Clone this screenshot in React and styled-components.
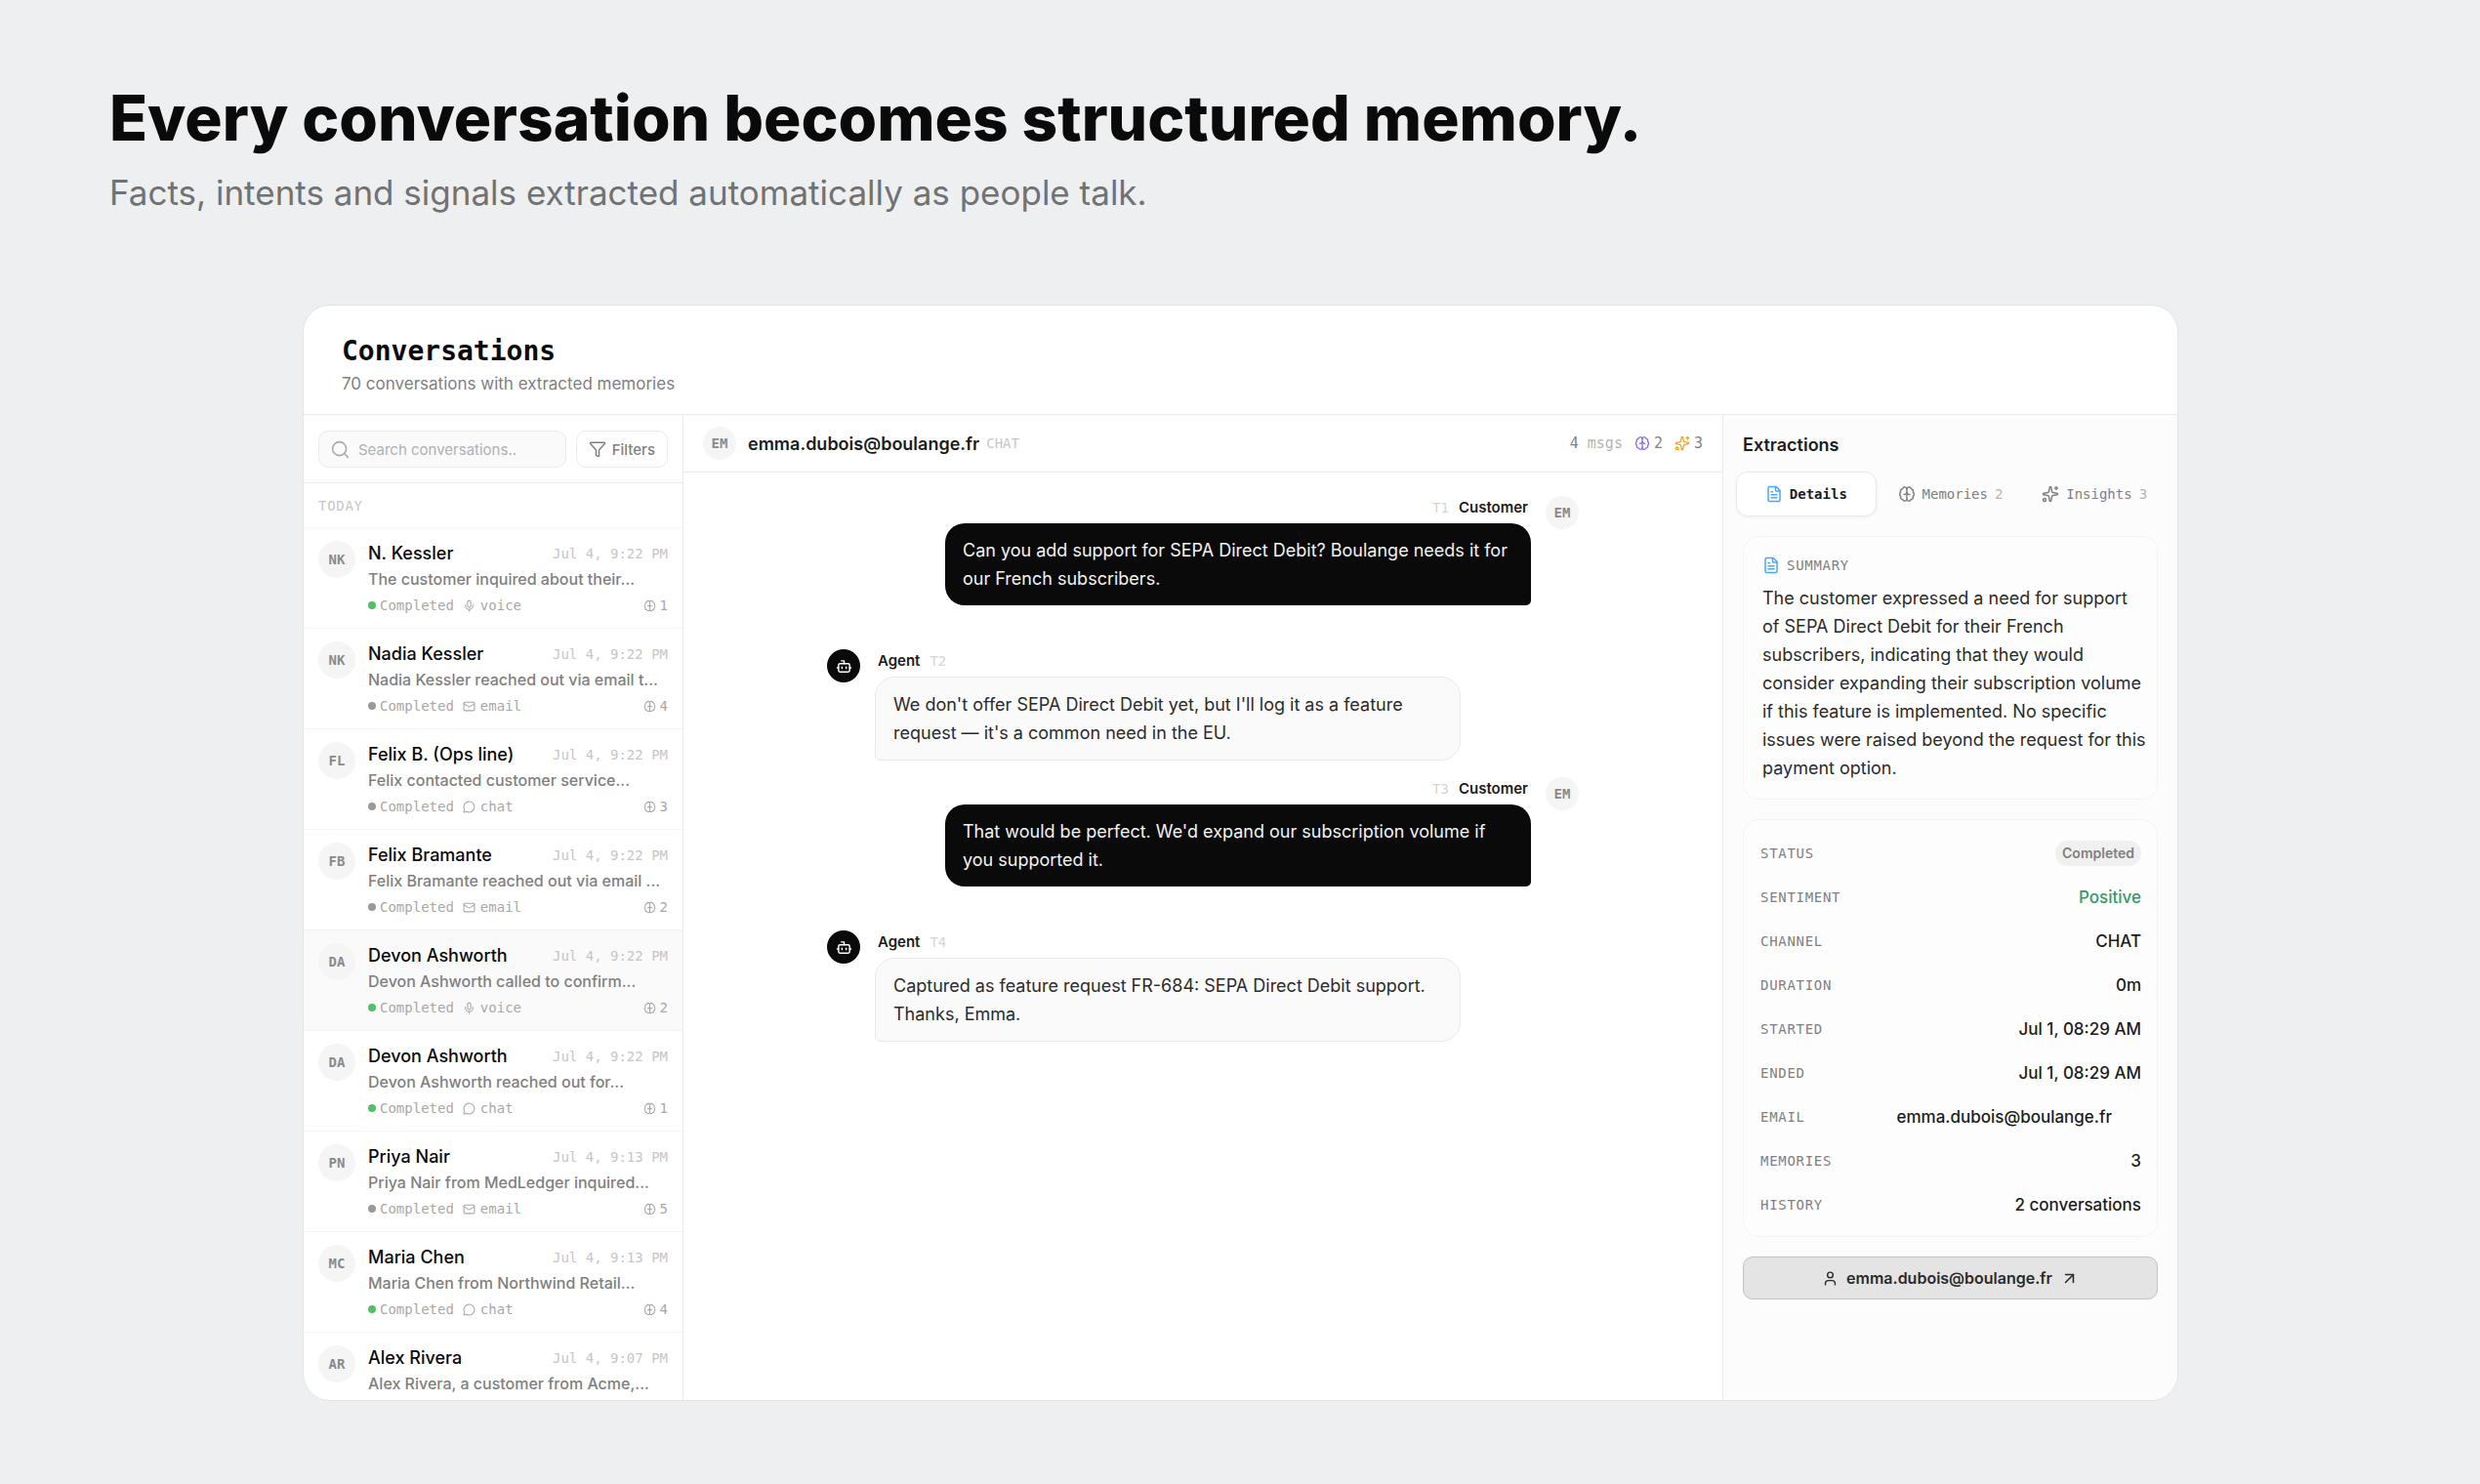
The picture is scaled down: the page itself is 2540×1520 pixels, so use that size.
import styled, { createGlobalStyle, css } from "styled-components";
import {
  ArrowUpRight,
  Bot,
  FileText,
  Funnel,
  Mail,
  MessageCircle,
  Mic,
  Search,
  Sparkles,
  User,
} from "lucide-react";

const conversations = [
  { initials: "NK", name: "N. Kessler", time: "Jul 4, 9:22 PM", text: "The customer inquired about their...", live: true, channel: "voice", count: 1 },
  { initials: "NK", name: "Nadia Kessler", time: "Jul 4, 9:22 PM", text: "Nadia Kessler reached out via email t...", channel: "email", count: 4 },
  { initials: "FL", name: "Felix B. (Ops line)", time: "Jul 4, 9:22 PM", text: "Felix contacted customer service...", channel: "chat", count: 3 },
  { initials: "FB", name: "Felix Bramante", time: "Jul 4, 9:22 PM", text: "Felix Bramante reached out via email ...", channel: "email", count: 2 },
  { initials: "DA", name: "Devon Ashworth", time: "Jul 4, 9:22 PM", text: "Devon Ashworth called to confirm...", live: true, channel: "voice", count: 2, active: true },
  { initials: "DA", name: "Devon Ashworth", time: "Jul 4, 9:22 PM", text: "Devon Ashworth reached out for...", live: true, channel: "chat", count: 1 },
  { initials: "PN", name: "Priya Nair", time: "Jul 4, 9:13 PM", text: "Priya Nair from MedLedger inquired...", channel: "email", count: 5 },
  { initials: "MC", name: "Maria Chen", time: "Jul 4, 9:13 PM", text: "Maria Chen from Northwind Retail...", live: true, channel: "chat", count: 4 },
  { initials: "AR", name: "Alex Rivera", time: "Jul 4, 9:07 PM", text: "Alex Rivera, a customer from Acme,..." },
];

const messages = [
  { turn: "T1", from: "Customer", text: "Can you add support for SEPA Direct Debit? Boulange needs it for our French subscribers." },
  { turn: "T2", from: "Agent", text: "We don't offer SEPA Direct Debit yet, but I'll log it as a feature request — it's a common need in the EU." },
  { turn: "T3", from: "Customer", text: "That would be perfect. We'd expand our subscription volume if you supported it." },
  { turn: "T4", from: "Agent", text: "Captured as feature request FR-684: SEPA Direct Debit support. Thanks, Emma." },
];

const facts = [
  { label: "Status", value: "Completed", kind: "pill" },
  { label: "Sentiment", value: "Positive", kind: "positive" },
  { label: "Channel", value: "CHAT" },
  { label: "Duration", value: "0m" },
  { label: "Started", value: "Jul 1, 08:29 AM" },
  { label: "Ended", value: "Jul 1, 08:29 AM" },
  { label: "Email", value: "emma.dubois@boulange.fr", kind: "copyable" },
  { label: "Memories", value: "3" },
  { label: "History", value: "2 conversations" },
];

const channelIcons = { voice: Mic, email: Mail, chat: MessageCircle };

function BrainIcon({ size = 18, color = "currentColor" }) {
  return (
    <svg width={size} height={size} viewBox="0 0 24 24" fill="none" stroke={color} strokeWidth="2" strokeLinecap="round" strokeLinejoin="round" aria-hidden="true">
      <path d="M12 5v15" />
      <path d="M12 5C11.500 2 7.500 1.500 6.300 4.600C3.800 5.200 2.900 7.500 3.500 9.500C1.800 11 1.800 13.800 3.500 15.200C3 17.500 4.300 19.400 6.500 19.600C7.800 22.300 11.500 22 12 19.500" />
      <path d="M12 5C12.500 2 16.500 1.500 17.700 4.600C20.200 5.200 21.100 7.500 20.500 9.500C22.200 11 22.200 13.800 20.500 15.200C21 17.500 19.700 19.400 17.500 19.600C16.200 22.300 12.500 22 12 19.500" />
      <path d="M8 12.500c2.200 0 4-1 4-3 0 2 1.800 3 4 3" />
    </svg>
  );
}

function ConversationRow({ item }) {
  const ChannelIcon = channelIcons[item.channel];
  return (
    <Row $active={item.active}>
      <Avatar $size={38}>{item.initials}</Avatar>
      <RowBody>
        <RowTop>
          <RowName>{item.name}</RowName>
          <RowTime>{item.time}</RowTime>
        </RowTop>
        <RowText>{item.text}</RowText>
        {ChannelIcon && (
          <RowMeta>
            <Dot $live={item.live} />
            Completed
            <MetaIcon>
              <ChannelIcon size={13} />
            </MetaIcon>
            {item.channel}
            <MetaCount>
              <BrainIcon size={13} />
              {item.count}
            </MetaCount>
          </RowMeta>
        )}
      </RowBody>
    </Row>
  );
}

function ChatMessage({ message }) {
  const isAgent = message.from === "Agent";
  return (
    <Message $agent={isAgent}>
      {isAgent ? (
        <BotAvatar>
          <Bot size={17} />
        </BotAvatar>
      ) : (
        <Avatar $size={34}>EM</Avatar>
      )}
      <MessageBody $agent={isAgent}>
        <MessageLabel $agent={isAgent}>
          <strong>{message.from}</strong>
          <Turn>{message.turn}</Turn>
        </MessageLabel>
        <Bubble $agent={isAgent}>{message.text}</Bubble>
      </MessageBody>
    </Message>
  );
}

export default function App() {
  return (
    <>
      <GlobalStyle />
      <Page>
        <Hero>
          <Headline>Every conversation becomes structured memory.</Headline>
          <Tagline>Facts, intents and signals extracted automatically as people talk.</Tagline>
        </Hero>
        <Window>
          <WindowHeader>
            <WindowTitle>Conversations</WindowTitle>
            <WindowSubtitle>70 conversations with extracted memories</WindowSubtitle>
          </WindowHeader>
          <Columns>
            <Sidebar>
              <SearchBar>
                <SearchField>
                  <Search size={21} strokeWidth={1.75} />
                  <SearchInput type="search" placeholder="Search conversations.." aria-label="Search conversations" />
                </SearchField>
                <FilterButton type="button">
                  <Funnel size={18} />
                  Filters
                </FilterButton>
              </SearchBar>
              <GroupLabel>TODAY</GroupLabel>
              <List>
                {conversations.map((item, index) => (
                  <ConversationRow key={index} item={item} />
                ))}
              </List>
            </Sidebar>

            <Chat>
              <ChatHeader>
                <Avatar $size={34}>EM</Avatar>
                <ChatName>emma.dubois@boulange.fr</ChatName>
                <ChatChannel>CHAT</ChatChannel>
                <ChatStats>
                  <span>
                    4 <Muted>msgs</Muted>
                  </span>
                  <Stat>
                    <BrainIcon size={16} color="#8b6cf6" />
                    2
                  </Stat>
                  <Stat>
                    <Sparkles size={16} color="#f5a524" />
                    3
                  </Stat>
                </ChatStats>
              </ChatHeader>
              <Thread>
                {messages.map((message) => (
                  <ChatMessage key={message.turn} message={message} />
                ))}
              </Thread>
            </Chat>

            <Panel>
              <PanelTitle>Extractions</PanelTitle>
              <Tabs role="tablist">
                <Tab type="button" role="tab" aria-selected="true" $active>
                  <FileText size={18} color="#4aa8f7" />
                  Details
                </Tab>
                <Tab type="button" role="tab" aria-selected="false">
                  <BrainIcon />
                  Memories <Muted>2</Muted>
                </Tab>
                <Tab type="button" role="tab" aria-selected="false">
                  <Sparkles size={18} />
                  Insights <Muted>3</Muted>
                </Tab>
              </Tabs>
              <PanelBody>
                <SummaryCard>
                  <SummaryTitle>
                    <FileText size={18} color="#4aa8f7" />
                    SUMMARY
                  </SummaryTitle>
                  <SummaryText>
                    The customer expressed a need for support of SEPA Direct Debit for their French subscribers,
                    indicating that they would consider expanding their subscription volume if this feature is
                    implemented. No specific issues were raised beyond the request for this payment option.
                  </SummaryText>
                </SummaryCard>
                <FactsCard>
                  {facts.map((fact) => (
                    <Fact key={fact.label}>
                      <dt>{fact.label}</dt>
                      <FactValue $kind={fact.kind}>{fact.value}</FactValue>
                    </Fact>
                  ))}
                </FactsCard>
                <ProfileButton type="button">
                  <User size={17} />
                  emma.dubois@boulange.fr
                  <ArrowUpRight size={19} />
                </ProfileButton>
              </PanelBody>
            </Panel>
          </Columns>
        </Window>
      </Page>
    </>
  );
}

const GlobalStyle = createGlobalStyle`
  :root {
    --sans: Inter, "Liberation Sans", sans-serif;
    --mono: "DejaVu Sans Mono", "Liberation Mono", monospace;
    --ink: #0a0a0a;
    --text: #2b2b2b;
    --gray: #808080;
    --light: #a8a8a8;
    --faint: #c6c6c6;
    --line: #e9e9ea;
    --soft-line: #f3f3f3;
  }

  *,
  *::before,
  *::after {
    box-sizing: border-box;
  }

  body {
    margin: 0;
    background-color: #eeeff1;
    font-family: var(--sans);
    color: var(--ink);
  }

  h1,
  h2,
  h3,
  p,
  dl,
  dd,
  ul {
    margin: 0;
    padding: 0;
  }

  button,
  input {
    font: inherit;
  }
`;

const Page = styled.main`
  display: flex;
  flex-direction: column;
  height: 100vh;
  padding-block-end: 85px;
`;

const Hero = styled.header`
  flex: none;
  padding: 80px 112px 92px;
`;

const Headline = styled.h1`
  font-size: 64px;
  font-weight: 800;
  line-height: 82px;
`;

const Tagline = styled.p`
  margin-block-start: 12px;
  font-size: 35px;
  line-height: 46px;
  color: #707274;
`;

const Window = styled.section`
  display: flex;
  flex-direction: column;
  flex: 1;
  min-height: 0;
  margin: 0 309px 0 310px;
  overflow: hidden;
  background-color: #fff;
  border: 1px solid #e2e3e5;
  border-radius: 28px;
`;

const WindowHeader = styled.header`
  padding: 29px 39px 18px;
  border-block-end: 1px solid var(--line);
`;

const WindowTitle = styled.h2`
  font-family: var(--mono);
  font-size: 28px;
  font-weight: 700;
  line-height: 36px;
`;

const WindowSubtitle = styled.p`
  margin-block-start: 2px;
  font-size: 17px;
  line-height: 26px;
  color: var(--gray);
`;

const Columns = styled.div`
  display: grid;
  grid-template-columns: 389px 1fr 466px;
  flex: 1;
  min-height: 0;
`;

const Sidebar = styled.aside`
  display: flex;
  flex-direction: column;
  min-height: 0;
  border-inline-end: 1px solid var(--line);
`;

const SearchBar = styled.div`
  display: flex;
  gap: 10px;
  padding: 16px 15px 15px;
  border-block-end: 1px solid var(--line);
`;

const SearchField = styled.label`
  display: flex;
  align-items: center;
  gap: 8px;
  flex: 1;
  min-width: 0;
  height: 38px;
  padding-inline: 11px;
  border: 1px solid var(--line);
  border-radius: 10px;
  background-color: #fafafa;
  color: var(--light);

  svg {
    flex: none;
  }
`;

const SearchInput = styled.input`
  width: 100%;
  min-width: 0;
  padding: 0;
  border: 0;
  outline: 0;
  background: none;
  font-size: 15px;

  &::placeholder {
    color: #b0b0b0;
  }
`;

const FilterButton = styled.button`
  display: flex;
  align-items: center;
  gap: 6px;
  height: 38px;
  padding-inline: 12px;
  border: 1px solid var(--line);
  border-radius: 10px;
  background-color: #fff;
  font-size: 15px;
  font-weight: 500;
  color: var(--gray);
`;

const GroupLabel = styled.h3`
  padding: 13px 15px 12px;
  border-block-end: 1px solid var(--soft-line);
  font-family: var(--mono);
  font-size: 14px;
  font-weight: 400;
  line-height: 20px;
  letter-spacing: 0.05em;
  color: var(--faint);
`;

const List = styled.ul`
  flex: 1;
  min-height: 0;
  overflow: hidden;
  list-style: none;
`;

const Row = styled.li`
  display: flex;
  gap: 13px;
  padding: 13px 15px;
  border-block-end: 1px solid var(--soft-line);
  background-color: ${({ $active }) => ($active ? "#fafafa" : "transparent")};
`;

const Avatar = styled.span`
  display: flex;
  align-items: center;
  justify-content: center;
  flex: none;
  width: ${({ $size }) => $size}px;
  height: ${({ $size }) => $size}px;
  border-radius: 50%;
  background-color: #f5f5f5;
  font-family: var(--mono);
  font-size: 14px;
  font-weight: 700;
  color: #8a8a8a;
`;

const RowBody = styled.div`
  flex: 1;
  min-width: 0;
`;

const RowTop = styled.div`
  display: flex;
  align-items: center;
  justify-content: space-between;
  line-height: 26px;
`;

const RowName = styled.span`
  font-size: 18px;
  font-weight: 500;
`;

const RowTime = styled.time`
  font-family: var(--mono);
  font-size: 14px;
  color: var(--faint);
`;

const RowText = styled.p`
  overflow: hidden;
  font-size: 16px;
  font-weight: 500;
  line-height: 26px;
  white-space: nowrap;
  text-overflow: ellipsis;
  color: var(--gray);
`;

const RowMeta = styled.div`
  display: flex;
  align-items: center;
  margin-block-start: 4px;
  font-family: var(--mono);
  font-size: 14px;
  line-height: 20px;
  color: var(--light);
`;

const Dot = styled.i`
  width: 8px;
  height: 8px;
  margin-inline-end: 4px;
  border-radius: 50%;
  background-color: ${({ $live }) => ($live ? "#4fc268" : "#9a9a9a")};
`;

const MetaIcon = styled.span`
  display: flex;
  margin-inline: 9px 5px;
`;

const MetaCount = styled.span`
  display: flex;
  align-items: center;
  gap: 4px;
  margin-inline-start: auto;
`;

const Chat = styled.section`
  display: flex;
  flex-direction: column;
  min-width: 0;
`;

const ChatHeader = styled.header`
  display: flex;
  align-items: center;
  height: 59px;
  padding-inline: 20px;
  border-block-end: 1px solid var(--line);
`;

const ChatName = styled.h3`
  margin-inline: 12px 7px;
  font-size: 18px;
  font-weight: 600;
  color: #1c1c1c;
`;

const ChatChannel = styled.span`
  font-family: var(--mono);
  font-size: 14px;
  color: var(--faint);
`;

const ChatStats = styled.div`
  display: flex;
  align-items: center;
  gap: 12px;
  margin-inline-start: auto;
  font-family: var(--mono);
  font-size: 15px;
  color: var(--gray);
`;

const Stat = styled.span`
  display: flex;
  align-items: center;
  gap: 4px;
`;

const Muted = styled.span`
  color: #b4b4b4;
`;

const Thread = styled.div`
  display: flex;
  flex-direction: column;
  gap: 17px;
  width: 100%;
  max-width: 770px;
  margin-inline: auto;
  padding-block-start: 24px;
`;

const Message = styled.article`
  display: flex;
  flex-direction: ${({ $agent }) => ($agent ? "row" : "row-reverse")};
  gap: 15px;
  padding-block-end: ${({ $agent }) => ($agent ? 0 : 28)}px;
`;

const BotAvatar = styled.span`
  display: flex;
  align-items: center;
  justify-content: center;
  flex: none;
  width: 34px;
  height: 34px;
  border-radius: 50%;
  background-color: var(--ink);
  color: #fff;
`;

const MessageBody = styled.div`
  display: flex;
  flex-direction: column;
  gap: 4px;
  align-items: ${({ $agent }) => ($agent ? "flex-start" : "flex-end")};
`;

const MessageLabel = styled.div`
  display: flex;
  flex-direction: ${({ $agent }) => ($agent ? "row" : "row-reverse")};
  gap: 10px;
  padding-inline: 3px;
  font-size: 15px;
  line-height: 24px;
  color: #1c1c1c;

  strong {
    font-weight: 600;
  }
`;

const Turn = styled.span`
  font-family: var(--mono);
  font-size: 14px;
  color: #d4d4d4;
`;

const Bubble = styled.p`
  width: 600px;
  padding: 13px 18px;
  font-size: 18px;
  line-height: 29px;

  ${({ $agent }) =>
    $agent
      ? css`
          border: 1px solid var(--line);
          border-radius: 20px 20px 20px 5px;
          background-color: #fafafa;
          color: var(--text);
        `
      : css`
          border-radius: 20px 20px 5px 20px;
          background-color: var(--ink);
          color: #f2f2f2;
        `}
`;

const Panel = styled.aside`
  display: flex;
  flex-direction: column;
  padding-inline: 13px;
  border-inline-start: 1px solid var(--line);
  background-color: #fcfcfc;
`;

const PanelTitle = styled.h3`
  padding: 18px 7px 14px;
  font-size: 18px;
  font-weight: 600;
  line-height: 26px;
  color: #1c1c1c;
`;

const Tabs = styled.div`
  display: grid;
  grid-template-columns: repeat(3, 1fr);
  gap: 4px;
`;

const Tab = styled.button`
  display: flex;
  align-items: center;
  justify-content: center;
  gap: 7px;
  height: 46px;
  padding: 0;
  border: 1px solid transparent;
  border-radius: 12px;
  background: none;
  font-family: var(--mono);
  font-size: 14px;
  color: var(--gray);

  ${({ $active }) =>
    $active &&
    css`
      border-color: var(--line);
      background-color: #fff;
      box-shadow: 0 1px 3px hsl(0deg 0% 0% / 6%);
      font-weight: 700;
      color: #1c1c1c;
    `}
`;

const PanelBody = styled.div`
  display: flex;
  flex-direction: column;
  gap: 20px;
  padding: 20px 7px;
`;

const cardStyles = css`
  border: 1px solid var(--soft-line);
  border-radius: 16px;
  background-color: #fdfdfd;
`;

const SummaryCard = styled.section`
  ${cardStyles}
  padding: 19px 10px 17px 19px;
`;

const SummaryTitle = styled.h4`
  display: flex;
  align-items: center;
  gap: 7px;
  margin: 0 0 9px;
  font-family: var(--mono);
  font-size: 14px;
  font-weight: 400;
  line-height: 20px;
  letter-spacing: 0.05em;
  color: var(--gray);
`;

const SummaryText = styled.p`
  font-size: 18px;
  line-height: 29px;
  color: var(--text);
`;

const FactsCard = styled.dl`
  ${cardStyles}
  padding: 11px 16px 10px 17px;
`;

const Fact = styled.div`
  display: flex;
  align-items: center;
  justify-content: space-between;
  height: 45px;

  dt {
    font-family: var(--mono);
    font-size: 14px;
    letter-spacing: 0.05em;
    text-transform: uppercase;
    color: var(--gray);
  }
`;

const FactValue = styled.dd`
  font-size: 17px;
  font-weight: 500;
  color: #1c1c1c;

  ${({ $kind }) =>
    $kind === "positive" &&
    css`
      color: #35996b;
    `}

  ${({ $kind }) =>
    $kind === "copyable" &&
    css`
      padding-inline-end: 30px;
    `}

  ${({ $kind }) =>
    $kind === "pill" &&
    css`
      padding-inline: 7px;
      border-radius: 13px;
      background-color: #f0f0f1;
      font-size: 14px;
      font-weight: 600;
      line-height: 26px;
      color: var(--gray);
    `}
`;

const ProfileButton = styled.button`
  display: flex;
  align-items: center;
  justify-content: center;
  gap: 8px;
  height: 44px;
  border: 1px solid #c2c2c2;
  border-radius: 10px;
  background-color: #e4e4e4;
  font-size: 16px;
  font-weight: 600;
  color: #2b2b2b;
`;
